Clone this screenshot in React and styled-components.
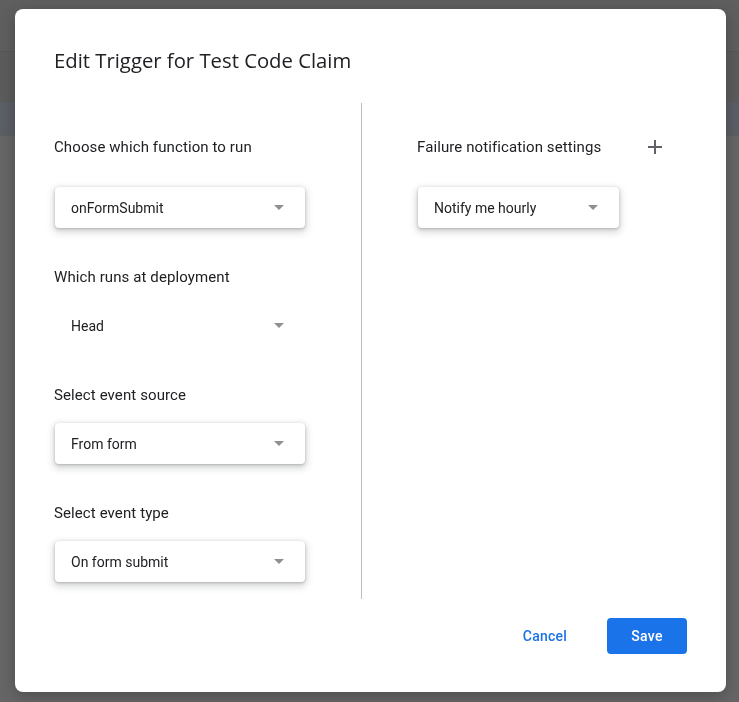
import React from 'react';
import styled, { createGlobalStyle } from 'styled-components';

const GlobalStyle = createGlobalStyle`
  html, body {
    margin: 0;
    padding: 0;
    height: 100%;
    background: #666666;
    font-family: Roboto, "Liberation Sans", Arial, sans-serif;
  }
`;

// dimmed page behind the dialog
const Backdrop = styled.div`
  height: 702px;
  background: #666666;
  display: flex;
  flex-direction: column;
`;

const Band = styled.div`
  height: ${props => props.h}px;
  background: ${props => props.bg};
  border-bottom: 1px solid ${props => props.line || 'transparent'};
`;

const Dialog = styled.div`
  position: fixed;
  top: 9px;
  left: 15px;
  width: 711px;
  height: 683px;
  box-sizing: border-box;
  background: #ffffff;
  border-radius: 8px;
  padding: 37px 39px 38px 39px;
  display: flex;
  flex-direction: column;
  box-shadow: 0 4px 16px rgba(0,0,0,0.25);
`;

const Title = styled.h2`
  margin: 0;
  font-family: "Open Sans", Roboto, sans-serif;
  font-size: 20.3px;
  line-height: 28px;
  font-weight: 400;
  color: #202124;
`;

const Columns = styled.div`
  display: flex;
  margin-top: 29px;
`;

const LeftColumn = styled.div`
  width: 307px;
  padding: 20px 0 17px 0;
  border-right: 1px solid #bdbdbd;
  display: flex;
  flex-direction: column;
`;

const RightColumn = styled.div`
  padding: 20px 0 0 55px;
  display: flex;
  flex-direction: column;
`;

const Section = styled.div`
  display: flex;
  flex-direction: column;
  margin-top: ${props => props.first ? 0 : 37}px;
`;

const LabelRow = styled.div`
  height: ${props => props.tall ? 48 : 24}px;
  width: ${props => props.w ? props.w + 'px' : 'auto'};
  display: flex;
  align-items: center;
  justify-content: space-between;
`;

const Label = styled.span`
  font-size: 15px;
  color: #202124;
  letter-spacing: 0.1px;
`;

const IconButton = styled.button`
  width: 48px;
  height: 48px;
  border: none;
  background: transparent;
  padding: 0;
  display: flex;
  align-items: center;
  justify-content: center;
  cursor: pointer;
`;

const Select = styled.div`
  margin-top: 16px;
  margin-left: 1px;
  width: ${props => props.w}px;
  height: 41px;
  box-sizing: border-box;
  padding: 0 21px 0 16px;
  border-radius: 4px;
  background: #ffffff;
  display: flex;
  align-items: center;
  justify-content: space-between;
  box-shadow: ${props => props.flat ? 'none' : '0 1px 3px rgba(60,64,67,0.3), 0 3px 7px 2px rgba(60,64,67,0.18)'};
  font-size: 14px;
  color: #202124;
`;

const Arrow = styled.span`
  width: 0;
  height: 0;
  border-left: 5px solid transparent;
  border-right: 5px solid transparent;
  border-top: 5px solid #909090;
`;

const Footer = styled.div`
  margin-top: auto;
  display: flex;
  justify-content: flex-end;
  align-items: center;
  gap: 22px;
`;

const Button = styled.button`
  width: 80px;
  height: 36px;
  border: none;
  border-radius: 4px;
  font-family: Roboto, sans-serif;
  font-size: 14px;
  font-weight: 500;
  letter-spacing: 0.25px;
  cursor: pointer;
  background: ${props => props.primary ? '#1a73e8' : 'transparent'};
  color: ${props => props.primary ? '#ffffff' : '#1a73e8'};
`;

const Field = ({ label, value, first, flat, w = 250 }) => (
  <Section first={first}>
    <LabelRow tall={first}>
      <Label>{label}</Label>
    </LabelRow>
    <Select w={w} flat={flat}>
      <span>{value}</span>
      <Arrow />
    </Select>
  </Section>
);

const PlusIcon = () => (
  <svg width="14" height="14" viewBox="0 0 14 14">
    <path d="M7 0v14M0 7h14" stroke="#5f6368" strokeWidth="2" fill="none" />
  </svg>
);

export default function App() {
  return (
    <>
      <GlobalStyle />
      <Backdrop>
        <Band h={51} bg="#5f5f5f" line="#575757" />
        <Band h={49} bg="#5c5c5c" line="#5a5a5a" />
        <Band h={33} bg="#5b5f66" line="#5e5e5e" />
      </Backdrop>
      <Dialog>
        <Title>Edit Trigger for Test Code Claim</Title>
        <Columns>
          <LeftColumn>
            <Field first label="Choose which function to run" value="onFormSubmit" />
            <Field flat label="Which runs at deployment" value="Head" />
            <Field label="Select event source" value="From form" />
            <Field label="Select event type" value="On form submit" />
          </LeftColumn>
          <RightColumn>
            <Section first>
              <LabelRow tall w={262}>
                <Label>Failure notification settings</Label>
                <IconButton aria-label="Add">
                  <PlusIcon />
                </IconButton>
              </LabelRow>
              <Select w={201}>
                <span>Notify me hourly</span>
                <Arrow />
              </Select>
            </Section>
          </RightColumn>
        </Columns>
        <Footer>
          <Button>Cancel</Button>
          <Button primary>Save</Button>
        </Footer>
      </Dialog>
    </>
  );
}
